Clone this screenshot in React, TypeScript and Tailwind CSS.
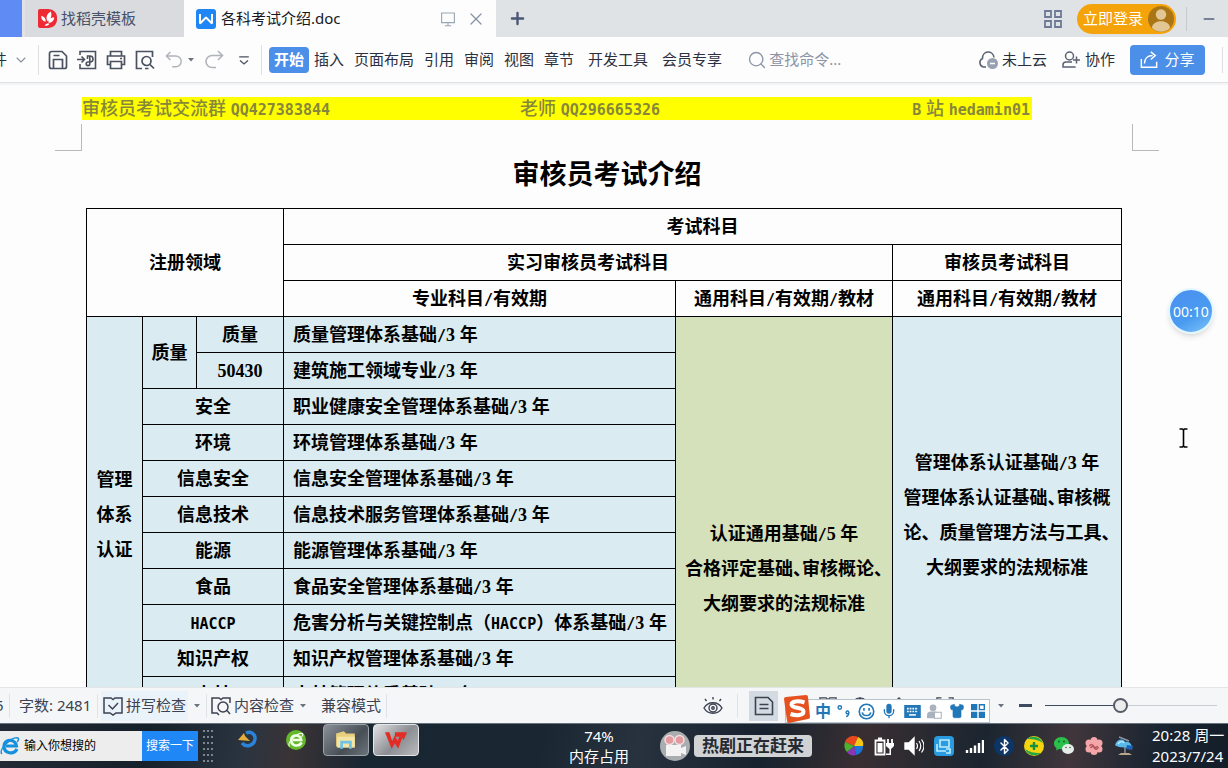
import type { ReactNode } from "react";
import { Bluetooth, ChevronDown, Mic, Minus, Plus, Search, Shirt, X } from "lucide-react";

interface RowData {
  name: string;
  subject: string;
}

const MENUS = ["插入", "页面布局", "引用", "审阅", "视图", "章节"];
const MENUS_EXTRA = ["开发工具", "会员专享"];

const ROWS: RowData[] = [
  { name: "安全", subject: "职业健康安全管理体系基础/3 年" },
  { name: "环境", subject: "环境管理体系基础/3 年" },
  { name: "信息安全", subject: "信息安全管理体系基础/3 年" },
  { name: "信息技术", subject: "信息技术服务管理体系基础/3 年" },
  { name: "能源", subject: "能源管理体系基础/3 年" },
  { name: "食品", subject: "食品安全管理体系基础/3 年" },
  { name: "HACCP", subject: "危害分析与关键控制点（HACCP）体系基础/3 年" },
  { name: "知识产权", subject: "知识产权管理体系基础/3 年" },
  { name: "森林", subject: "森林管理体系基础/3 年" },
];

const CELL = "border border-black p-0 text-center";

// Digits and Latin runs each take a face that is half as wide as the Chinese text
function Mixed({ text }: { text: string }) {
  return (
    <>
      {text.split(/([0-9]+|[A-Z/]+)/).map((part, i) => {
        if (/^[0-9]/.test(part)) return <span key={i} className="font-['Liberation_Serif',serif] leading-none">{part}</span>;
        if (i % 2) return <span key={i} className="font-['DejaVu_Sans_Mono',monospace] text-[15px] leading-none">{part}</span>;
        return part;
      })}
    </>
  );
}

function HeaderText({ text }: { text: string }) {
  return (
    <>
      {text.split(/([!-~]+)/).map((part, i) =>
        i % 2 ? <span key={i} className="font-['DejaVu_Sans_Mono',monospace] text-[15px] font-bold leading-none">{part}</span> : part
      )}
    </>
  );
}

function Halt({ children }: { children: ReactNode }) {
  return <span className="[font-feature-settings:'halt']">{children}</span>;
}

function Icon({ children, className = "", w = 20, sw = 1.4 }: { children: ReactNode; className?: string; w?: number; sw?: number }) {
  return (
    <svg viewBox="0 0 20 20" width={w} height={w} fill="none" stroke="currentColor" strokeWidth={sw} className={`shrink-0 ${className}`} aria-hidden="true">
      {children}
    </svg>
  );
}

function Caret({ className = "" }: { className?: string }) {
  return (
    <svg viewBox="0 0 6 4" className={`h-1 w-1.5 shrink-0 fill-[#6b7280] ${className}`} aria-hidden="true">
      <path d="M0 0h6L3 3.6z" />
    </svg>
  );
}

function TabBar() {
  return (
    <header className="flex h-[37px] shrink-0 items-stretch bg-[#dfe3e5] text-[15px]">
      <div className="w-[22px] shrink-0 bg-[#5f8bf5]" />
      <button className="ml-[3px] flex w-[159px] shrink-0 items-center gap-1 bg-[#d9dbde] pl-[13px] text-[#45506a]">
        <Icon w={19}>
          <path d="M2 0h9a9 9 0 0 1 9 10 9 9 0 0 1-9 10H2a2 2 0 0 1-2-2V2a2 2 0 0 1 2-2z" fill="#ee2b35" stroke="none" />
          <path d="M10 13C8 9 9 5 13.500 2.500c1.500 4.500 0 8.500-3.500 10.500zM8 13.500C4.500 12.500 3 10 3.500 7 7 8 8.500 10 8 13.500zM11 14.500c0-3.500 2.500-5.500 6-5.500 0 3.500-2.500 5.500-6 5.500zM7 17.500c1-2 3-2.500 5-2-1 2-3 2.500-5 2z" fill="#fff" stroke="none" />
        </Icon>
        找稻壳模板
      </button>
      <div className="flex w-[312px] shrink-0 items-center bg-[#fdfdfd] pl-3 text-[#16181d]">
        <Icon>
          <rect width="20" height="20" rx="3" fill="#1f86f5" stroke="none" />
          <path d="M4 5v9.500l6-6 6 6V5" stroke="#fff" strokeWidth="2" strokeLinejoin="bevel" />
        </Icon>
        <span className="ml-[5px] grow">各科考试介绍.doc</span>
        <Icon w={16} className="text-[#9aa5b5]">
          <path d="M2 2.500h16v12H2zM10 14.500v4M6 18.500h8" />
        </Icon>
        <button aria-label="关闭" className="ml-2.5 mr-2.5 text-[#8592a5]"><X size={20} strokeWidth={1.5} /></button>
      </div>
      <button aria-label="新建" className="ml-3 text-[#4b5675]"><Plus size={19} strokeWidth={3} /></button>
      <div className="ml-auto flex items-center">
        <Icon className="text-[#6c7a96]" sw={1.8}>
          <path d="M2 2h6v6H2zM12 2h6v6h-6zM2 12h6v6H2zM12 12h6v6h-6z" />
        </Icon>
        <button className="ml-3.5 flex h-[30px] items-center gap-[5px] rounded-full bg-[#f5a30b] pl-1.5 pr-0.5 text-white">
          立即登录
          <svg viewBox="0 0 26 26" className="size-[26px]" aria-hidden="true">
            <circle cx="13" cy="13" r="13" fill="#aa7514" />
            <circle cx="13" cy="8.500" r="5.200" fill="#e2c795" />
            <path d="M4 22c0-9 18-9 18 0-5 5-13 5-18 0z" fill="#e2c795" />
          </svg>
        </button>
        <div className="ml-2.5 h-6 w-px bg-[#c5cacf]" />
        <button aria-label="最小化" className="ml-3.5 mr-[11px] text-[#56627d]"><Minus size={16} strokeWidth={2.5} /></button>
      </div>
    </header>
  );
}

function Toolbar() {
  return (
    <nav className="flex h-[46px] shrink-0 items-center overflow-hidden whitespace-nowrap border-b border-[#e0e2e4] bg-[#fdfdfd] text-[15px] text-[#2a3040]">
      <span className="-ml-2 w-[15px]">件</span>
      <ChevronDown size={16} strokeWidth={1.6} className="ml-1.5 text-[#8a919e]" />
      <div className="ml-[9px] h-[30px] w-px bg-[#dcdee1]" />
      <div className="ml-[9px] flex items-center gap-[9px] text-[#4a5160]">
        <Icon sw={1.7}>
          <path d="M1.500 3.500a2 2 0 0 1 2-2H14l4.500 4.500v10.500a2 2 0 0 1-2 2h-13a2 2 0 0 1-2-2zM5.500 18V9.500h9V18M5.500 5.500h6" />
        </Icon>
        <Icon sw={1.6}>
          <path d="M3 5V1.500h15.500v17H3V14M0 9.500h7M4.500 6.500l3 3-3 3M10.500 9V6h2.500a2.500 2.500 0 0 1 0 6h-2a1.800 1.800 0 1 0 1.800 1.800V6" />
        </Icon>
        <Icon sw={1.7}>
          <path d="M4.500 6V1.500h11V6M4.500 14.500h-3V6h17v8.500h-3M4.500 11.500h11v7h-11zM14 8.500h2" />
        </Icon>
        <Icon sw={1.7}>
          <path d="M7 18.500H1.500v-17h16V7M13.500 18.500H10" />
          <circle cx="11.500" cy="11" r="4.500" />
          <path d="M15 14.500l4 4" />
        </Icon>
      </div>
      <div className="ml-2.5 flex items-center text-[#b0b4ba]">
        <Icon className="w-[18px]" sw={1.6}><path d="M6 1L1.500 5.500 6 10M1.500 5.500H12a6 6 0 0 1 0 12H8" /></Icon>
        <Caret className="ml-[5px]" />
        <Icon className="ml-2.5" sw={1.6}><path d="M14 1l4.500 4.500L14 10M18.500 5.500H8a6 6 0 0 0 0 12h4" /></Icon>
        <Icon w={16} className="ml-3 text-[#4a5160]" sw={1.6}><path d="M4 6h12M5 10.500l5 4.500 5-4.500" /></Icon>
      </div>
      <div className="ml-[9px] h-[30px] w-px bg-[#dcdee1]" />
      <button className="ml-[7px] h-[26px] w-10 rounded bg-[#4c8fe9] font-bold text-white">开始</button>
      <div className="ml-[5px] flex gap-2.5">
        {MENUS.map((m) => <button key={m}>{m}</button>)}
      </div>
      <div className="ml-3.5 flex gap-3.5">
        {MENUS_EXTRA.map((m) => <button key={m}>{m}</button>)}
      </div>
      <label className="ml-[25px] flex items-center gap-0.5 text-[#8b93a5]">
        <Search size={20} strokeWidth={1.6} />
        <input placeholder="查找命令..." aria-label="查找命令" className="w-24 outline-none placeholder:text-[#8b93a5]" />
      </label>
      <div className="ml-auto flex items-center">
        <button className="flex items-center gap-1">
          <Icon className="text-[#5a6170]" sw={1.5}>
            <path d="M8 17H5.500a4.500 4.500 0 0 1-1-8.500C4.500 0 15 0 16 7.500" />
            <circle cx="14.500" cy="13.500" r="5.500" fill="#98a0b3" stroke="none" />
            <path d="M12 13.500h5" stroke="#fff" />
          </Icon>
          未上云
        </button>
        <button className="ml-3.5 flex items-center gap-1">
          <Icon className="text-[#5a6170]" sw={1.5}>
            <circle cx="8.500" cy="6" r="4" />
            <path d="M14 16.500V17H2v-2a3 3 0 0 1 3-3h6M15.500 6.500v7M12 10h7" />
          </Icon>
          协作
        </button>
        <button className="ml-[15px] flex h-[30px] w-[75px] items-center justify-center gap-1.5 rounded bg-[#4c8fe9] text-white">
          <Icon w={18} sw={1.6}>
            <path d="M1.500 9v9h17v-6M5 14c0-6 4-9 9-9M12 1l5 4-5 4.500" />
          </Icon>
          分享
        </button>
        <div className="ml-[17px] mr-[5px] h-[26px] w-px bg-[#dcdee1]" />
      </div>
    </nav>
  );
}

function SubjectTable() {
  return (
    <table className="ml-1 w-[1036px] table-fixed border-collapse text-[18px] font-bold leading-[35px] text-black">
      <colgroup>
        <col className="w-14" />
        <col className="w-[54px]" />
        <col className="w-[87px]" />
        <col className="w-[392px]" />
        <col className="w-[217px]" />
        <col className="w-[229px]" />
      </colgroup>
      <thead>
        <tr className="h-9">
          <th rowSpan={3} colSpan={3} className={CELL}>注册领域</th>
          <th colSpan={3} className={CELL}>考试科目</th>
        </tr>
        <tr className="h-9">
          <th colSpan={2} className={CELL}>实习审核员考试科目</th>
          <th className={CELL}>审核员考试科目</th>
        </tr>
        <tr className="h-9">
          <th className={CELL}><Mixed text="专业科目/有效期" /></th>
          <th className={CELL}><Mixed text="通用科目/有效期/教材" /></th>
          <th className={CELL}><Mixed text="通用科目/有效期/教材" /></th>
        </tr>
      </thead>
      <tbody className="bg-[#daecf2]">
        <tr className="h-9">
          <td rowSpan={11} className={CELL}>管理<br />体系<br />认证</td>
          <td rowSpan={2} className={CELL}>质量</td>
          <td className={CELL}>质量</td>
          <td className="border border-black py-0 pl-[9px]"><Mixed text="质量管理体系基础/3 年" /></td>
          <td rowSpan={14} className="whitespace-nowrap border border-black bg-[#d5e1ba] p-0 text-center">
            <Mixed text="认证通用基础/5 年" /><br />
            合格评定基础<Halt>、</Halt>审核概论<Halt>、</Halt><br />
            大纲要求的法规标准
          </td>
          <td rowSpan={11} className="whitespace-nowrap border border-black p-0 text-center">
            <Mixed text="管理体系认证基础/3 年" /><br />
            管理体系认证基础<Halt>、</Halt>审核概<br />
            论、质量管理方法与工具<Halt>、</Halt><br />
            大纲要求的法规标准
          </td>
        </tr>
        <tr className="h-9">
          <td className={CELL}><Mixed text="50430" /></td>
          <td className="border border-black py-0 pl-[9px]"><Mixed text="建筑施工领域专业/3 年" /></td>
        </tr>
        {ROWS.map((r) => (
          <tr key={r.name} className="h-9">
            <td colSpan={2} className={CELL}><Mixed text={r.name} /></td>
            <td className="whitespace-nowrap border border-black py-0 pl-[9px]"><Mixed text={r.subject} /></td>
          </tr>
        ))}
        {[0, 1, 2].map((i) => (
          <tr key={i} className="h-9">
            <td colSpan={3} className={CELL} />
            <td className={CELL} />
            <td className={CELL} />
          </tr>
        ))}
      </tbody>
    </table>
  );
}

function DocumentView() {
  return (
    <main className="min-h-0 grow overflow-hidden border-t-2 border-[#f3f4f5] bg-[#fdfdfd] pr-3.5 pt-3">
      <div className="mx-auto w-[1050px]">
        <div className="mr-[100px] grid h-[23px] grid-cols-[438px_1fr_auto] bg-[#ffff00] text-[18px] font-medium leading-[22px] text-[#87873c]">
          <span><HeaderText text="审核员考试交流群 QQ427383844" /></span>
          <span><HeaderText text="老师 QQ296665326" /></span>
          <span className="pr-0.5"><HeaderText text="B 站 hedamin01" /></span>
        </div>
        <div className="-mx-[27px] mt-1 flex justify-between">
          <div className="size-[27px] border-b border-r border-[#b9b9b9]" />
          <div className="size-[27px] border-b border-l border-[#b9b9b9]" />
        </div>
        <h1 className="mb-[15px] mt-1 text-center text-[27px] font-bold leading-[38px] text-black">审核员考试介绍</h1>
        <SubjectTable />
      </div>
    </main>
  );
}

function StatusBar() {
  return (
    <footer className="relative flex h-9 shrink-0 items-center whitespace-nowrap border-t border-[#e3e6e9] bg-[#f4f6f8] text-[15px] text-[#3c4250]">
      <span className="-ml-[5px] w-[9px]">5</span>
      <div className="ml-[5px] h-6 w-px bg-[#dfe2e6]" />
      <span className="ml-[9px] w-[74px]">字数: 2481</span>
      <div className="ml-1 mr-[3px] h-6 w-px bg-[#dfe2e6]" />
      <button className="flex h-[30px] items-center gap-[3px] bg-[#ebf3fa] px-0.5">
        <Icon sw={1.5}><path d="M10 3.500L8 2H1v15h6l3 2 3-2h6V2h-7zM5.500 9l4 4 5.500-6" /></Icon>
        拼写检查
      </button>
      <Caret className="ml-1.5" />
      <div className="ml-1.5 h-6 w-px bg-[#dfe2e6]" />
      <button className="ml-1 flex items-center gap-[3px]">
        <Icon sw={1.5}>
          <path d="M6 17H1V2h7l2 1.500L12 2h7v5M1 17h5l2 2" />
          <circle cx="12" cy="11" r="5" />
          <path d="M16 14.500l3 3.500" />
        </Icon>
        内容检查
      </button>
      <Caret className="ml-1.5" />
      <button className="ml-[15px]">兼容模式</button>
      <div className="ml-[5px] h-6 w-px bg-[#dfe2e6]" />

      <div className="ml-auto flex items-center">
        <Icon sw={1.4}>
          <path d="M1 12c4-7 14-7 18 0-4 7-14 7-18 0zM10 3.500V1M3.500 5L2 3M16.500 5L18 3" />
          <circle cx="10" cy="12" r="4" />
          <circle cx="10" cy="12" r="1.200" />
        </Icon>
        <div className="ml-3.5 h-6 w-px bg-[#dfe2e6]" />
        <button aria-label="页面视图" className="ml-[11px] flex h-[30px] w-[29px] items-center justify-center bg-[#d4dae1]">
          <Icon sw={1.6}><path d="M1.500 1.500H14l4.500 4.500v12.500h-17zM5.500 8.500h9M5.500 12.500h9" /></Icon>
        </button>
        <div className="ml-[9px] flex items-center gap-3.5">
          <Icon w={18}><path d="M1 2h2M6 2h13M1 10h2M6 10h13" /></Icon>
          <Icon w={18}><path d="M10 3L8 1H1v15h18V1h-7z" /></Icon>
          <Icon w={18}><circle cx="10" cy="10" r="9" /><path d="M1 10h18M10 1c-5 6-5 12 0 18M10 1c5 6 5 12 0 18" /></Icon>
        </div>
        <Icon w={18} className="ml-[21px]"><path d="M4 7l6-6 6 6v10H4z" /></Icon>
        <Icon w={18} className="ml-7"><path d="M1 5V1h5M14 1h5v4M19 15v4h-5M6 19H1v-4" /></Icon>
        <Caret className="ml-11" />
        <button aria-label="缩小" className="ml-[15px] h-[3px] w-[13px] bg-[#3d4a60]" />
        <input
          type="range"
          aria-label="缩放"
          defaultValue={43}
          className="ml-[13px] mr-[11px] h-4 w-[172px] appearance-none bg-transparent [&::-webkit-slider-runnable-track]:h-px [&::-webkit-slider-runnable-track]:bg-[linear-gradient(to_right,#3d4a60_43%,#c9cdd2_43%)] [&::-webkit-slider-thumb]:-mt-[7px] [&::-webkit-slider-thumb]:size-[15px] [&::-webkit-slider-thumb]:appearance-none [&::-webkit-slider-thumb]:rounded-full [&::-webkit-slider-thumb]:border-2 [&::-webkit-slider-thumb]:border-[#555b66] [&::-webkit-slider-thumb]:bg-[#ececec]"
        />
      </div>
      <ImeBar />
    </footer>
  );
}

// floating input-method bar lying over the status icons
function ImeBar() {
  return (
    <div className="absolute bottom-0 right-[238px] flex h-6 w-[205px] items-center border border-[#b9c3cc] bg-white text-[#2277b8]">
      <svg viewBox="0 0 28 28" className="-ml-[3px] -mt-1 size-7 shrink-0" aria-hidden="true">
        <path d="M1 4Q1 2 3 2L23 0q2 0 2 2l2 20q0 2-2 2L6 28q-2 0-2-2z" fill="#e5521f" />
        <path d="M21.500 7.500c-6-2-13-1.500-13 2 0 4.500 12 2 12 7 0 4-7 4.500-13 2.500" fill="none" stroke="#fff" strokeWidth="4" />
      </svg>
      <div className="flex grow items-center justify-between pl-1 pr-1">
        <span className="text-[16px] font-bold leading-5">中</span>
        <Icon w={14} sw={2}><circle cx="4" cy="5" r="2.500" /><path d="M15 10a2 2 0 1 1-.1 0zM17 12c0 3-1 5-4 6" /></Icon>
        <Icon w={17} sw={1.9}><circle cx="10" cy="10" r="8.500" /><path d="M7 6v3M13 6v3M5 11c1 5 9 5 10 0" /></Icon>
        <Mic size={16} strokeWidth={2} className="[&>rect]:fill-current" />
        <Icon w={17}>
          <path d="M1 3h18v14H1z" fill="currentColor" />
          <path d="M3.500 6.500h13M3.500 10h13" stroke="#fff" strokeWidth="2" strokeDasharray="2 1.200" />
          <path d="M6 14h8" stroke="#fff" strokeWidth="1.800" />
        </Icon>
        <Icon w={15} className="text-[#a9b2bd]">
          <circle cx="8" cy="5" r="4.500" fill="currentColor" stroke="none" />
          <path d="M0 19v-4q0-5 5-5h6q4 0 4 5v4z" fill="currentColor" stroke="none" />
          <path d="M10 11h9v8h-9z" fill="#fff" />
        </Icon>
        <Shirt size={16} strokeWidth={1} className="fill-current" />
        <Icon w={14} sw={2}>
          <path d="M1 1h7v7H1z" fill="currentColor" />
          <path d="M12 1h7v7h-7z" />
          <path d="M1 12h7v7H1zM12 12h7v7h-7z" fill="currentColor" />
        </Icon>
      </div>
    </div>
  );
}

function EdgeLogo({ color, size = 20 }: { color: string; size?: number }) {
  return (
    <svg viewBox="0 0 20 20" width={size} height={size} className="shrink-0" fill="none" aria-hidden="true">
      <path d="M17 13c-3 6-13 5-13-3S16 3 16.500 10H6" stroke={color} strokeWidth="3.200" />
      <path d="M2 18C-2 14 12 0 18 2c1 1 0 3-1 4" stroke={color} strokeWidth="1.400" />
    </svg>
  );
}

function TrayIcons() {
  return (
    <div className="flex items-center gap-2.5">
      <Icon>
        <g stroke="none">
          <path d="M10 10L1 6c2-6 9-7 13-5z" fill="#e6491e" />
          <path d="M10 10l4-9c4 2 6 5 5 9z" fill="#f5c61a" />
          <path d="M10 10h9c0 5-3 8-7 9z" fill="#1b74d8" />
          <path d="M10 10l2 9c-4 1-7 0-9-3z" fill="#8838b6" />
          <path d="M10 10l-7 6C0 13 0 9 1 6z" fill="#4cb12e" />
        </g>
      </Icon>
      <Icon className="text-white" sw={1.8}>
        <path d="M1.500 4.500h9v14h-9zM4 2.500h4" />
        <path d="M3.500 7h5v9.500h-5z" fill="currentColor" stroke="none" />
        <path d="M14 3v4M18 3v4" />
        <path d="M12 7h8v3l-3 3v6h-5v-1.500h3.500V13L12 10z" fill="currentColor" stroke="none" />
      </Icon>
      <Icon className="text-white">
        <path d="M1 7h4l5-5v16l-5-5H1z" fill="currentColor" />
        <path d="M12.500 7q2 3 0 6M15 5q3.500 5 0 10M17.500 3.500q5 6.500 0 13" strokeWidth="1.200" />
      </Icon>
      <Icon>
        <rect width="20" height="20" rx="4" fill="#2a9be0" stroke="none" />
        <path d="M6 4h9v7H6zM3 8v7h9M12 13h4v4h-4" stroke="#bfeeff" strokeWidth="1.600" />
      </Icon>
      <Icon>
        <path d="M3 17v-3M7 17v-5M11 17V9.500M15 17V7M19 17V4" stroke="#fff" strokeWidth="2.400" />
      </Icon>
      <span className="flex size-5 items-center justify-center rounded-full bg-[#0b3667] text-white"><Bluetooth size={17} strokeWidth={2} /></span>
      <Icon>
        <circle cx="10" cy="10" r="10" fill="#f4d411" stroke="none" />
        <path d="M3 3c5-4 13-3 16 4-5-3-8-4-16-4zM17 17c-5 4-13 3-16-4 5 3 8 4 16 4z" fill="#28a745" stroke="none" />
        <path d="M10 6v8M6 10h8" stroke="#14913c" strokeWidth="2.400" />
      </Icon>
      <Icon>
        <g stroke="none">
          <path d="M7.500 1C3 1 0 4 0 7.500c0 2 1 3.500 2.500 4.500L2 14.500l3-1.500c6 1 10-2 10-5.500S12 1 7.500 1z" fill="#2bbf4c" />
          <ellipse cx="14" cy="13" rx="6" ry="5" fill="#e5eee7" />
          <circle cx="5" cy="5.500" r="1" fill="#14602a" /><circle cx="10" cy="5.500" r="1" fill="#14602a" />
          <circle cx="12" cy="11.500" r=".8" fill="#555" /><circle cx="16" cy="11.500" r=".8" fill="#555" />
        </g>
      </Icon>
      <Icon>
        <g fill="#f4a6a8" stroke="none">
          <circle cx="10" cy="4.500" r="3.500" /><circle cx="15" cy="7" r="3.500" /><circle cx="15" cy="13" r="3.500" />
          <circle cx="10" cy="15.500" r="3.500" /><circle cx="5" cy="13" r="3.500" /><circle cx="5" cy="7" r="3.500" />
          <circle cx="10" cy="10" r="5" />
        </g>
        <path d="M5.500 10q2-3 4 0t4 0M6.500 12q2-3 4 0t4-1" stroke="#b4545c" />
      </Icon>
      <Icon>
        <path d="M1 9c2-6 8-7 10-3 4-1 7 2 7 6-4-1-12 1-17-3z" fill="#58b9ea" stroke="none" />
        <path d="M4 8c2-3 5-3 6-1" stroke="#cdeefd" />
        <path d="M13 9l6 1-1 4-6-1z" fill="#1e62b5" stroke="none" />
        <path d="M5 1l10 4M11 11v6" stroke="#8b96a3" />
        <path d="M4 19h14l-3-2H7z" fill="#b9a888" stroke="none" />
      </Icon>
    </div>
  );
}

function Taskbar() {
  return (
    <div className="flex h-[45px] shrink-0 items-center whitespace-nowrap border-t border-[#66717d] bg-[linear-gradient(100deg,#232a35_0%,#15202b_12%,#2a3440_20%,#3a3336_24%,#182632_30%,#1a2733_44%,#27323e_52%,#17222e_62%,#392f32_70%,#1b2530_80%,#40363b_87%,#192430_94%,#141d28_100%)] text-[15px] text-white">
      <form className="flex h-[30px] shrink-0 items-center bg-[#ededed]" onSubmit={(e) => e.preventDefault()}>
        <EdgeLogo color="#1590dc" />
        <input aria-label="搜索" placeholder="输入你想搜的" className="ml-1 w-[118px] text-[12px] outline-none placeholder:text-black" />
        <button className="h-full w-14 bg-[#1f87f6] text-[12px]">搜索一下</button>
      </form>
      <div className="ml-1 h-9 w-3 shrink-0 bg-[radial-gradient(circle,#7d8690_1px,transparent_1px)] bg-[size:4px_6px]" />
      <div className="flex shrink-0 self-start">
        <button aria-label="浏览器" className="ml-[21px] flex h-8 w-[26px] items-center justify-center">
          <Icon>
            <path d="M8 3c5-2 9.500 1 9 6-1 7-9 9-13 4" stroke="#2b83d8" strokeWidth="3.500" />
            <path d="M0 10l6-7 1 3 5 5z" fill="#e5ad3c" stroke="none" />
          </Icon>
        </button>
        <button aria-label="安全浏览器" className="ml-[22px] flex h-8 w-[26px] items-center justify-center">
          <span className="flex size-5 items-center justify-center rounded-full bg-[#64b82c]"><EdgeLogo color="#f2ffe8" size={16} /></span>
        </button>
        <button aria-label="资源管理器" className="ml-3.5 flex h-8 w-[46px] items-center justify-center rounded-sm border border-[#9ba2a8] bg-[linear-gradient(135deg,#8c9298,#474e56_60%,#6c747b)]">
          <Icon w={22}>
            <path d="M1 4l7-2 2 2h8v12H1z" fill="#e8cf7b" stroke="none" />
            <path d="M2 7h16v10H2z" fill="#f5e5a5" stroke="none" />
            <path d="M6 18v-6h8v6" stroke="#70c3e5" strokeWidth="2.500" />
          </Icon>
        </button>
        <button aria-label="文字处理" className="ml-1 flex h-8 w-[46px] items-center justify-center rounded-sm border border-[#e5e7e9] bg-[linear-gradient(135deg,#e1e2e4,#8b8e92_55%,#b9bbbe)]">
          <Icon w={22}>
            <path d="M0 3h4l2.500 8L9 6l2.500 5L13 7h3l-4 11-3-5-3 5z" fill="#e42b24" stroke="none" />
            <path d="M9 3h11l-3 7-2-3H9z" fill="#e42b24" stroke="none" />
          </Icon>
        </button>
      </div>
      <div className="ml-[150px] text-center leading-5">
        <div>74%</div>
        <div>内存占用</div>
      </div>
      <svg viewBox="0 0 30 30" className="ml-[31px] size-[30px] shrink-0" aria-hidden="true">
        <circle cx="15" cy="15" r="15" fill="#aaadb0" />
        <circle cx="9.500" cy="9" r="4.500" fill="#e19a9e" stroke="#f3dedf" strokeWidth="1.500" />
        <circle cx="19.500" cy="9" r="4.500" fill="#e19a9e" stroke="#f3dedf" strokeWidth="1.500" />
        <path d="M6 14h15v3l5-2v9l-5-2v3H6z" fill="#f3f3f3" />
      </svg>
      <div className="ml-1 h-[22px] rounded bg-[#d0d2d4] px-2 text-[17px] font-bold leading-[22px] text-[#252a30]">热剧正在赶来</div>
      <div className="ml-auto"><TrayIcons /></div>
      <div className="ml-[18px] mr-0.5 w-[74px] text-left leading-[21px]">
        <div>20:28 周一</div>
        <div>2023/7/24</div>
      </div>
    </div>
  );
}

export default function App() {
  return (
    <div className="relative flex h-screen flex-col overflow-hidden bg-[#fdfdfd] font-['Noto_Sans','Noto_Sans_CJK_SC',sans-serif]">
      <TabBar />
      <Toolbar />
      <DocumentView />
      <StatusBar />
      <Taskbar />
      <div className="absolute right-3.5 top-[288px] flex size-[46px] items-center justify-center rounded-full border-2 border-[#e4f6ff] bg-[linear-gradient(150deg,#4b8ff0,#4a9bf0_60%,#7cc4f8)] text-[14px] text-white shadow-md">
        00:10
      </div>
      <svg viewBox="0 0 9 20" className="absolute right-10 top-[428px] h-5 w-[9px]" fill="none" stroke="#000" strokeWidth="1.600" aria-hidden="true">
        <path d="M.5 1h3l1 1 1-1h3M.5 19h3l1-1 1 1h3M4.500 2v16" />
      </svg>
    </div>
  );
}
